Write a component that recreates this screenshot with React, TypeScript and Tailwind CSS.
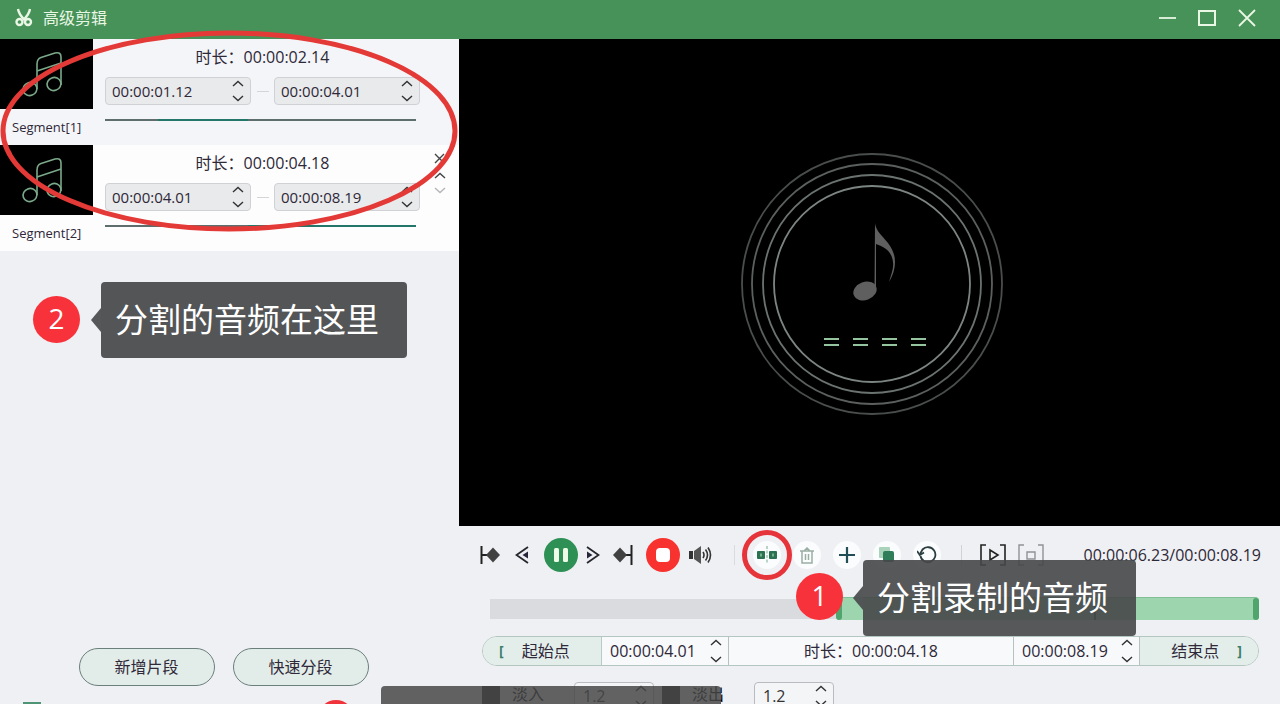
import type { ReactNode } from "react";
import clsx from "clsx";

const segments = [
  { id: 1, name: "Segment[1]", duration: "00:00:02.14", start: "00:00:01.12", end: "00:00:04.01", from: 17, to: 46 },
  { id: 2, name: "Segment[2]", duration: "00:00:04.18", start: "00:00:04.01", end: "00:00:08.19", from: 46, to: 100 },
];

function Chevron({ down = false, className }: { down?: boolean; className?: string }) {
  return (
    <svg
      width="12"
      height="7"
      viewBox="0 0 12 7"
      fill="none"
      stroke="currentColor"
      strokeWidth="1.4"
      className={className}
    >
      <path d={down ? "M1 1l5 4.6L11 1" : "M1 6l5-4.6L11 6"} />
    </svg>
  );
}

function SpinBox({
  label,
  value,
  className,
}: {
  label: string;
  value: string;
  className?: string;
}) {
  return (
    <div className={clsx("flex items-stretch", className)}>
      <input
        aria-label={label}
        defaultValue={value}
        className="w-0 min-w-0 flex-1 bg-transparent outline-none"
      />
      <div className="flex w-6 flex-col items-center justify-between py-0.5 text-[#333]">
        <button aria-label={`${label} +`} className="flex">
          <Chevron />
        </button>
        <button aria-label={`${label} -`} className="flex">
          <Chevron down />
        </button>
      </div>
    </div>
  );
}

function MusicThumb() {
  return (
    <div className="flex h-[70px] w-[93px] items-center justify-center bg-black">
      <svg
        width="42"
        height="46"
        viewBox="0 0 42 46"
        fill="none"
        stroke="#7ba98a"
        strokeWidth="1.6"
        className="mr-2.5"
      >
        <path d="M16 38V13q0-5 4-6.500L34 2q6-1.500 6 4v28" />
        <path d="M16 20l24-8" />
        <ellipse cx="9" cy="38" rx="7" ry="6.500" transform="rotate(-20 9 38)" />
        <ellipse cx="33" cy="33" rx="7" ry="6.500" transform="rotate(-20 33 33)" />
      </svg>
    </div>
  );
}

function Segment({ segment, active }: { segment: (typeof segments)[number]; active: boolean }) {
  return (
    <li className={clsx("flex h-[106px]", active ? "bg-[#fdfdfe]" : "bg-[#f4f5f8]")}>
      <div className="w-[93px] shrink-0">
        <MusicThumb />
        <p className="pl-3 text-[13px] leading-9 text-[#2e2838]">{segment.name}</p>
      </div>
      <div className="ml-3 w-[315px] shrink-0 pt-2">
        <p className="text-center text-base leading-5 text-[#2e2838]">
          时长：<span>{segment.duration}</span>
        </p>
        <div className="mt-2.5 flex items-center justify-between text-[15px] text-[#2e2838]">
          <SpinBox
            label="Start"
            value={segment.start}
            className="h-7 w-[146px] rounded border border-[#d0d1d4] bg-[#e9eaec] pl-1.5"
          />
          <span className="h-px w-3 bg-[#d4d5d8]" />
          <SpinBox
            label="End"
            value={segment.end}
            className="h-7 w-[146px] rounded border border-[#d0d1d4] bg-[#e9eaec] pl-1.5"
          />
        </div>
        <div className="mt-3.5 mr-1 h-0.5 bg-[#5d6e6c]">
          <div
            className="h-full bg-[#22766a]"
            style={{ marginLeft: `${segment.from}%`, width: `${segment.to - segment.from}%` }}
          />
        </div>
      </div>
      {active && (
        <div className="flex flex-1 flex-col items-center gap-2 pt-2 text-[#444]">
          <button aria-label="Remove" className="flex">
            <svg width="11" height="11" viewBox="0 0 11 11" stroke="currentColor" strokeWidth="1.4">
              <path d="M1 1l9 9M10 1L1 10" />
            </svg>
          </button>
          <button aria-label="Move up" className="flex">
            <Chevron />
          </button>
          <button aria-label="Move down" className="flex text-[#b5b6b8]">
            <Chevron down />
          </button>
        </div>
      )}
    </li>
  );
}

function ToolButton({
  label,
  className,
  children,
}: {
  label: string;
  className?: string;
  children: ReactNode;
}) {
  return (
    <button
      aria-label={label}
      className={clsx("relative flex shrink-0 items-center justify-center", className)}
    >
      {children}
    </button>
  );
}

function Preview() {
  return (
    <div className="flex min-h-0 flex-1 items-center justify-center bg-black pl-1">
      <svg width="290" height="290" viewBox="0 0 290 290" fill="none" className="mt-0.5">
        <circle cx="145" cy="145" r="130" stroke="#494d4c" strokeWidth="1.800" />
        <circle cx="145" cy="145" r="120" stroke="#5b605f" strokeWidth="1.800" />
        <circle cx="145" cy="145" r="109" stroke="#6b7371" strokeWidth="1.800" />
        <circle cx="145" cy="145" r="98" stroke="#7c8582" strokeWidth="1.800" />
        <path
          d="M148 84c1 13 20 19 20 39 0 8-3 15-6 20 2-7 5-14 4-20-1-10-8-15-17-18v47h-1.500z"
          fill="#5f5f5f"
        />
        <ellipse cx="138" cy="152" rx="12" ry="9" transform="rotate(-20 138 152)" fill="#5f5f5f" />
        <g stroke="#93c49e" strokeWidth="2.200">
          <path d="M97 200h15M97 206h15" />
          <path d="M126 200h15M126 206h15" />
          <path d="M155 200h15M155 206h15" />
          <path d="M184 200h15M184 206h15" />
        </g>
      </svg>
    </div>
  );
}

function Toolbar() {
  const round = "size-7 rounded-full bg-[#fbfcfd]";
  return (
    <div className="flex h-[58px] items-center">
      <div className="flex items-center gap-2">
        <ToolButton label="Go to start" className="w-5">
          <svg width="20" height="20" viewBox="0 0 20 20">
            <path d="M1.500 1v18M2 10h5" stroke="#222" strokeWidth="2" />
            <path d="M6 10l7-7.500 7 7.500-7 7.500z" fill="#414141" />
          </svg>
        </ToolButton>
        <ToolButton label="Previous frame" className="w-7">
          <svg width="14" height="18" viewBox="0 0 14 18">
            <path d="M13 1L1.500 9 13 17" fill="none" stroke="#26262e" strokeWidth="1.800" />
            <path d="M13 5.500v7L7.500 9z" fill="#26263a" />
          </svg>
        </ToolButton>
        <ToolButton label="Pause" className="size-[34px] rounded-full bg-[#2e9055]">
          <svg width="16" height="16" viewBox="0 0 16 16" fill="#eefbe6">
            <rect x="1" y="1" width="5" height="14" rx="1.500" />
            <rect x="10" y="1" width="5" height="14" rx="1.500" />
          </svg>
        </ToolButton>
        <ToolButton label="Next frame" className="w-3.5">
          <svg width="14" height="18" viewBox="0 0 14 18">
            <path d="M1 1l11.500 8L1 17" fill="none" stroke="#26262e" strokeWidth="1.800" />
            <path d="M1 5.500v7L6.500 9z" fill="#26263a" />
          </svg>
        </ToolButton>
        <ToolButton label="Go to end" className="w-[30px]">
          <svg width="20" height="20" viewBox="0 0 20 20">
            <path d="M18.500 0v20M13 10h5" stroke="#222" strokeWidth="2" />
            <path d="M0 10l7-7.500 7 7.500-7 7.500z" fill="#414141" />
          </svg>
        </ToolButton>
        <ToolButton label="Stop" className="size-[34px] rounded-full bg-[#f8322f]">
          <span className="size-3.5 rounded-sm bg-white" />
        </ToolButton>
        <ToolButton label="Volume" className="w-6">
          <svg width="24" height="20" viewBox="0 0 24 20" fill="none">
            <path d="M1 6h4v8H1z" fill="#333" />
            <path d="M6 6l7-5v18l-7-5z" fill="#555" />
            <path d="M15 7q2 3 0 6M17.500 4.500q4 5.500 0 11M20 2.500q5 7.500 0 15" stroke="#333" strokeWidth="1.600" />
          </svg>
        </ToolButton>
      </div>
      <span className="mr-[18px] ml-[22px] h-5 w-px bg-[#d9dbde]" />
      <div className="flex items-center gap-3">
        <ToolButton label="Split" className={round}>
          <svg width="20" height="18" viewBox="0 0 20 18">
            <rect x="0" y="5" width="8" height="8" rx="1" fill="#2c7150" />
            <rect x="12" y="5" width="8" height="8" rx="1" fill="#2c7150" />
            <path d="M4 7.500v3M16 7.500v3" stroke="#8cc8a0" strokeWidth="1.500" />
            <path d="M10 0v18" stroke="#8db99f" strokeWidth="1.200" strokeDasharray="3 1.500" />
          </svg>
          <span className="pointer-events-none absolute -inset-[11px] rounded-full border-[5px] border-[#e5343a]" />
        </ToolButton>
        <ToolButton label="Delete" className={round}>
          <svg width="14" height="17" viewBox="0 0 14 17" fill="none" stroke="#9aaea5" strokeWidth="1.500">
            <path d="M0 4h14M2 4v12h10V4M4 4l3-3 3 3M5.500 7v6M8.500 7v6" />
          </svg>
        </ToolButton>
        <ToolButton label="Add" className={round}>
          <svg width="16" height="16" viewBox="0 0 16 16" stroke="#214f55" strokeWidth="2.200">
            <path d="M8 0v16M0 8h16" />
          </svg>
        </ToolButton>
        <ToolButton label="Copy" className={round}>
          <svg width="16" height="16" viewBox="0 0 16 16">
            <rect x="0" y="0" width="11" height="11" rx="1" fill="#a9d3ba" />
            <rect x="4" y="4" width="11" height="11" rx="2" fill="#2f7d59" />
          </svg>
        </ToolButton>
        <ToolButton label="Reset" className={round}>
          <svg width="20" height="18" viewBox="0 0 20 18" fill="none" stroke="#2c3e40" strokeWidth="1.800">
            <path d="M3.500 10a7.500 7.500 0 1 0 2-6.500L3 8" />
            <path d="M0 5l2.800 4L7 6.500" />
          </svg>
        </ToolButton>
      </div>
      <span className="mr-[18px] ml-[20px] h-5 w-px bg-[#d0d2d5]" />
      <div className="flex items-center gap-3">
        <ToolButton label="Play segment" className="w-[26px]">
          <svg width="26" height="22" viewBox="0 0 26 22" fill="none" stroke="#222" strokeWidth="1.600">
            <path d="M6 1H1v20h5M20 1h5v20h-5M10 6v10l8-5z" />
          </svg>
        </ToolButton>
        <ToolButton label="Stop segment" className="w-[26px]">
          <svg width="26" height="22" viewBox="0 0 26 22" fill="none" stroke="#909295" strokeWidth="1.400">
            <path d="M6 1H1v20h5M20 1h5v20h-5M9 8h8v7H9z" />
          </svg>
        </ToolButton>
      </div>
      <span className="ml-auto text-base whitespace-nowrap text-[#2e2838]">
        00:00:06.23/00:00:08.19
      </span>
    </div>
  );
}

function RangeRow() {
  return (
    <div className="mx-0.5 mt-4 flex h-[30px] items-stretch overflow-hidden rounded-full border border-[#b3c6bf] bg-[#f8f9fb] text-base text-[#2e2838]">
      <button className="flex w-[119px] items-center gap-[18px] border-r border-[#b9c9c4] bg-[#e3edea] pl-4">
        <span className="text-sm font-bold text-[#3d7e68]">[</span>
        起始点
      </button>
      <SpinBox label="起始点" value="00:00:04.01" className="w-[127px] border-r border-[#b9c0c0] pl-2" />
      <p className="flex flex-1 items-center justify-center whitespace-nowrap">
        时长：<span>00:00:04.18</span>
      </p>
      <SpinBox label="结束点" value="00:00:08.19" className="w-[127px] border-x border-[#b9c0c0] pl-2" />
      <button className="flex w-[118px] items-center justify-end gap-[18px] bg-[#e3edea] pr-4">
        结束点
        <span className="text-sm font-bold text-[#3d7e68]">]</span>
      </button>
    </div>
  );
}

function FadeControl({ label }: { label: string }) {
  return (
    <div className="flex w-[180px] items-start">
      <label className="flex items-start gap-3">
        <input type="checkbox" className="mt-1 size-[18px] appearance-none bg-[#222]" />
        <span className="mt-0.5 text-base leading-5 text-black">{label}</span>
      </label>
      <SpinBox
        label={label}
        value="1.2"
        className="ml-[30px] h-7 w-20 rounded border border-[#b9bbbe] bg-[#f4f5f7] pl-2 text-base text-[#333]"
      />
    </div>
  );
}

function Badge({ className, children }: { className?: string; children: ReactNode }) {
  return (
    <span
      className={clsx(
        "absolute flex size-[47px] items-center justify-center rounded-full bg-[#f7323a] pb-1 text-[28px] text-white",
        className
      )}
    >
      {children}
    </span>
  );
}

function Callout({ className, children }: { className?: string; children: ReactNode }) {
  return (
    <div
      className={clsx(
        "pointer-events-none absolute h-[76px] rounded px-3.5 text-[33px] leading-[76px] whitespace-nowrap text-white",
        className
      )}
    >
      <svg width="10" height="24" viewBox="0 0 10 24" className="absolute top-[26px] right-full">
        <path d="M10 0v24L0 12z" fill="#4d4e50" fillOpacity="0.95" />
      </svg>
      {children}
    </div>
  );
}

export default function App() {
  return (
    <div className="flex h-screen flex-col overflow-hidden bg-[#eff0f3] font-['Open_Sans','Noto_Sans_CJK_SC',sans-serif]">
      <header className="flex h-[39px] shrink-0 items-center bg-[#479259] pr-6 pb-1 pl-[15px] text-[#e9f7e4]">
        <svg width="18" height="19" viewBox="0 0 18 19" fill="none" stroke="currentColor" strokeWidth="2.400">
          <path d="M3 1q1 6 7 11M15 1q-1 6-7 11" />
          <circle cx="4.500" cy="14" r="3" />
          <circle cx="13" cy="14" r="3" />
        </svg>
        <h1 className="ml-2.5 text-base">高级剪辑</h1>
        <div className="ml-auto flex items-center gap-[22px]">
          <button aria-label="Minimize">
            <svg width="18" height="18" viewBox="0 0 18 18" stroke="currentColor" strokeWidth="1.800">
              <path d="M1 9h17" />
            </svg>
          </button>
          <button aria-label="Maximize">
            <svg width="18" height="18" viewBox="0 0 18 18" fill="none" stroke="currentColor" strokeWidth="2">
              <rect x="1" y="2" width="16" height="14" />
            </svg>
          </button>
          <button aria-label="Close">
            <svg width="18" height="18" viewBox="0 0 18 18" stroke="currentColor" strokeWidth="1.800">
              <path d="M1 1l16 16M17 1L1 17" />
            </svg>
          </button>
        </div>
      </header>

      <main className="relative flex min-h-0 flex-1">
        <aside className="relative flex w-[459px] shrink-0 flex-col overflow-hidden">
          <ul>
            {segments.map((s) => (
              <Segment key={s.id} segment={s} active={s.id === 2} />
            ))}
          </ul>
          <div className="mt-auto flex justify-center gap-[18px] pr-3 text-base text-[#2e2838]">
            <button className="h-[38px] w-[136px] rounded-full border border-[#6b7f7b] bg-[#e2ece8]">
              新增片段
            </button>
            <button className="h-[38px] w-[136px] rounded-full border border-[#6b7f7b] bg-[#e2ece8]">
              快速分段
            </button>
          </div>
          <div className="mt-4 ml-[23px] h-0.5 w-[18px] bg-[#4f9474]" />

          <Badge className="top-[257px] left-[33px]">2</Badge>
          <Callout className="top-[243px] left-[101px] bg-[#545557] pr-[28px]">分割的音频在这里</Callout>
        </aside>

        <section className="flex min-w-0 flex-1 flex-col">
          <Preview />
          <div className="relative shrink-0 pr-[19px] pl-[21px]">
            <Toolbar />
            <div className="mt-[13px] mr-0.5 ml-2.5 flex h-[23px] items-center">
              <div className="h-5 w-[45%] bg-[#d9dbde]" />
              <div className="flex h-full flex-1 rounded border-t border-[#7fbf93] bg-[#9dd6ae]">
                <span className="h-full w-1.5 rounded bg-[#4fa56d]" />
                <span className="h-full w-3/5 border-r-2 border-[#2f5f45]" />
                <span className="ml-auto h-full w-1.5 rounded bg-[#4fa56d]" />
              </div>
            </div>
            <RangeRow />
            <div className="mx-0.5 mt-4 flex h-[22px] overflow-hidden">
              <FadeControl label="淡入" />
              <FadeControl label="淡出" />
            </div>
            <Badge className="top-[47px] left-[337px]">1</Badge>
            <Callout className="top-[34px] left-[404px] bg-[#464749]/90 pr-[28px]">分割录制的音频</Callout>
          </div>
        </section>

        <svg
          width="460"
          height="208"
          viewBox="0 0 460 208"
          fill="none"
          className="pointer-events-none absolute -top-3 left-0"
        >
          <ellipse cx="229" cy="104" rx="226" ry="98" stroke="#e43a37" strokeWidth="5" />
        </svg>
        <div className="pointer-events-none absolute bottom-0 left-[381px] h-[18px] w-[340px] rounded-t bg-[#484848]/85" />
        <div className="pointer-events-none absolute bottom-0 left-[318px] h-1 w-9 overflow-hidden">
          <div className="size-9 rounded-full bg-[#f0323a]" />
        </div>
      </main>
    </div>
  );
}
